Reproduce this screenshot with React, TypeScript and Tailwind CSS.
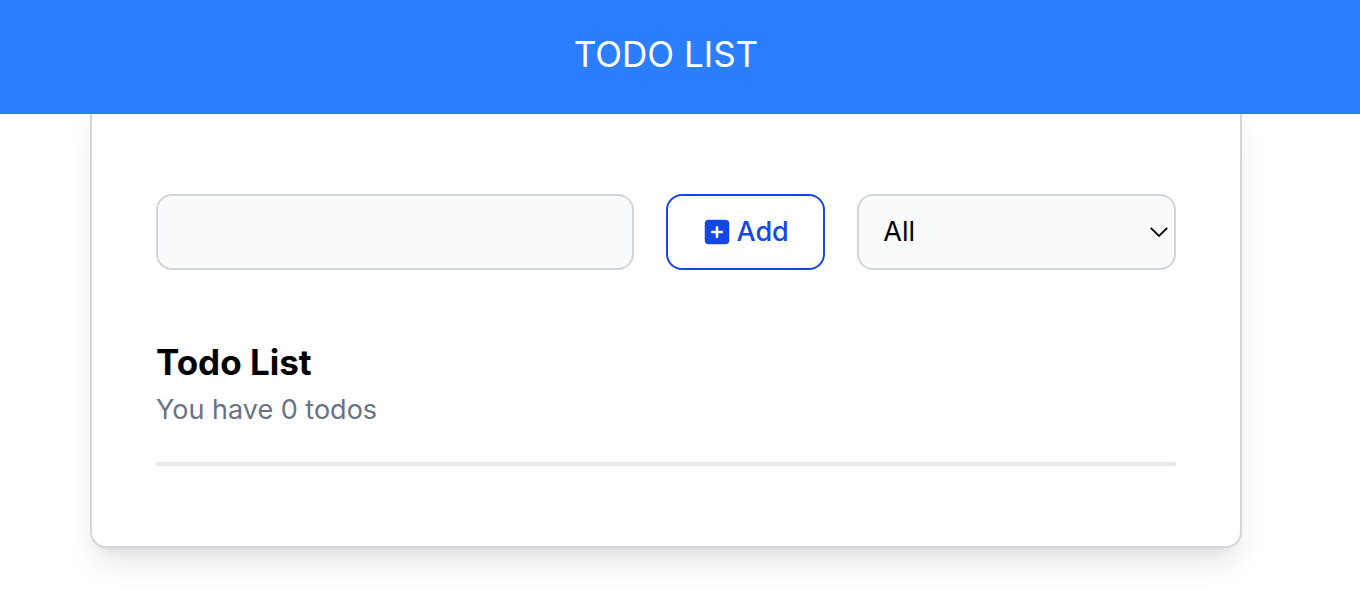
import { useState } from "react";
import { FaSquarePlus } from "react-icons/fa6";

type Filter = "All" | "Active" | "Completed";

const filters: Filter[] = ["All", "Active", "Completed"];

interface Todo {
  id: number;
  text: string;
  done: boolean;
}

function Header() {
  return (
    <header className="sticky top-0 z-10 bg-[#2b7fff] pt-[26px] pr-7 pb-8 text-center text-white">
      <h1 className="text-[35px] leading-14 font-normal">TODO LIST</h1>
    </header>
  );
}

export default function App() {
  const [todos, setTodos] = useState<Todo[]>([]);
  const [text, setText] = useState("");
  const [filter, setFilter] = useState<Filter>("All");

  const visible = todos.filter((t) => filter === "All" || t.done === (filter === "Completed"));

  function addTodo() {
    if (!text.trim()) return;
    setTodos([...todos, { id: todos.length + 1, text, done: false }]);
    setText("");
  }

  return (
    <div className="min-h-screen bg-white font-['Inter','Liberation_Sans',sans-serif] text-black">
      <Header />
      <main className="-mt-4 pr-[118px] pb-8 pl-[90px]">
        <section className="rounded-2xl border-2 border-[#d1d5dc] bg-white px-16 pt-[94px] pb-20 shadow-[0_20px_30px_-6px_rgba(0,0,0,0.1),0_8px_12px_-8px_rgba(0,0,0,0.1)]">
          <form
            className="grid grid-cols-[3fr_1fr_2fr] gap-8"
            onSubmit={(e) => {
              e.preventDefault();
              addTodo();
            }}
          >
            <input
              type="text"
              aria-label="New todo"
              value={text}
              onChange={(e) => setText(e.target.value)}
              className="h-19 w-full min-w-0 rounded-2xl border-2 border-[#d1d5dc] bg-[#f9fafb] px-6 text-[27px]"
            />
            <button
              type="submit"
              className="flex h-19 min-w-0 items-center justify-center gap-1.5 rounded-2xl border-2 border-[#1447e6] bg-white text-[27px] font-medium text-[#1447e6]"
            >
              <FaSquarePlus className="h-7 w-auto shrink-0" aria-hidden="true" />
              Add
            </button>
            <div className="relative min-w-0">
              <select
                aria-label="Filter todos"
                value={filter}
                onChange={(e) => setFilter(e.target.value as Filter)}
                className="h-19 w-full appearance-none rounded-2xl border-2 border-[#d1d5dc] bg-[#f9fafb] px-6 text-[27px]"
              >
                {filters.map((f) => (
                  <option key={f}>{f}</option>
                ))}
              </select>
              <svg
                viewBox="0 0 20 12"
                className="pointer-events-none absolute top-8 right-[7px] h-3 w-5"
                fill="none"
                stroke="currentColor"
                strokeWidth="1.8"
                aria-hidden="true"
              >
                <path d="M1.8 1.8 10 10l8.2-8.2" />
              </svg>
            </div>
          </form>
          <h2 className="mt-16 text-[35px] leading-14 font-bold">Todo List</h2>
          <p className="text-[27px] leading-10 text-[#6a7282]">You have {todos.length} todos</p>
          <hr className="mt-8 h-1 rounded-sm border-0 bg-[#e5e7eb]" />
          {visible.length > 0 && (
            <ul className="mt-8 grid gap-4 text-[27px]">
              {visible.map((t) => (
                <li key={t.id}>{t.text}</li>
              ))}
            </ul>
          )}
        </section>
      </main>
    </div>
  );
}
